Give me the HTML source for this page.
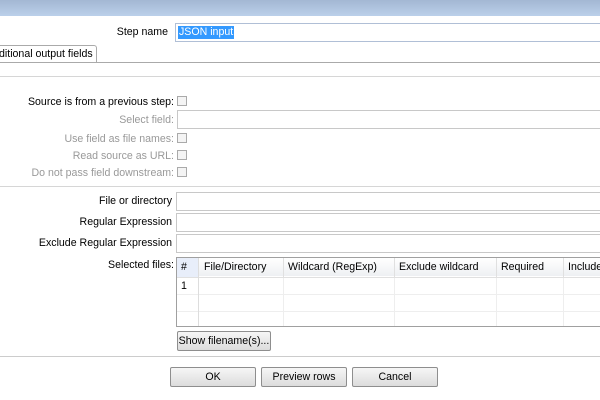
<!DOCTYPE html>
<html><head><style>
body{margin:0;width:600px;height:400px;background:#fff;position:relative;overflow:hidden;font-family:"Liberation Sans","Noto Sans CJK SC",sans-serif;font-size:10.6px;color:#000}
.a{position:absolute;white-space:nowrap}
.lbl{position:absolute;text-align:right;white-space:nowrap;line-height:14px}
.g{color:#999}
.inp{position:absolute;background:#fff;border:1px solid #c8c8c8;box-sizing:border-box}
.cb{position:absolute;width:10px;height:10px;border:1px solid #aaa;background:#f4f4f4;box-sizing:border-box}
.hl{position:absolute;height:1px;background:#d6d6d6;left:0;width:600px}
.btn{position:absolute;height:20px;box-sizing:border-box;border:1px solid #8e8e8e;border-radius:2px;background:linear-gradient(#f6f6f6,#dcdcdc);text-align:center;line-height:18px;white-space:nowrap}
table{border-collapse:collapse;font-size:10.6px;white-space:nowrap}
</style></head><body>
<div class="a" style="left:0;top:0;width:600px;height:16px;background:linear-gradient(#a3b7d3,#bbd0ea)"></div>
<div class="lbl" style="right:432px;top:25px">Step name</div>
<div class="inp" style="left:175px;top:23px;width:430px;height:19px;border-color:#b0bfd6"><span style="position:absolute;left:2px;top:2px;background:#3399ff;color:#fff;line-height:13px;padding:0 1px">JSON input</span></div>
<div class="a" style="left:-2px;top:45px;width:97px;height:17px;border:1px solid #aaa;border-bottom:none;border-radius:0 3px 0 0;line-height:16px;overflow:hidden">ditional output fields</div>
<div class="hl" style="top:62px;background:#aaa"></div>
<div class="hl" style="top:76px"></div>
<div class="lbl" style="right:426px;top:95px">Source is from a previous step:</div>
<div class="cb" style="left:177px;top:96px"></div>
<div class="lbl g" style="right:426px;top:113px">Select field:</div>
<div class="inp" style="left:177px;top:110px;width:430px;height:19px"></div>
<div class="lbl g" style="right:426px;top:132px">Use field as file names:</div>
<div class="cb" style="left:177px;top:133px"></div>
<div class="lbl g" style="right:426px;top:149px">Read source as URL:</div>
<div class="cb" style="left:177px;top:150px"></div>
<div class="lbl g" style="right:426px;top:166px">Do not pass field downstream:</div>
<div class="cb" style="left:177px;top:167px"></div>
<div class="hl" style="top:186px"></div>
<div class="lbl" style="right:428px;top:194px">File or directory</div>
<div class="inp" style="left:176px;top:192px;width:430px;height:19px"></div>
<div class="lbl" style="right:428px;top:215px">Regular Expression</div>
<div class="inp" style="left:176px;top:213px;width:430px;height:19px"></div>
<div class="lbl" style="right:428px;top:236px">Exclude Regular Expression</div>
<div class="inp" style="left:176px;top:234px;width:430px;height:19px"></div>
<div class="lbl" style="right:426px;top:258px">Selected files:</div>
<div class="a" style="left:176px;top:257px;width:430px;height:70px;border:1px solid #a0a0a0;box-sizing:border-box;overflow:hidden">
<table style="width:440px">
<tr style="height:19px;background:linear-gradient(#fff,#eef0f3);border-bottom:1px solid #e0e0e0">
<td style="width:16px;padding-left:4px;border-right:1px solid #ddd;background:#e8eefa">#</td>
<td style="width:78px;padding-left:5px;border-right:1px solid #e0e0e0">File/Directory</td>
<td style="width:105px;padding-left:4px;border-right:1px solid #e0e0e0">Wildcard (RegExp)</td>
<td style="width:96px;padding-left:4px;border-right:1px solid #e0e0e0">Exclude wildcard</td>
<td style="width:61px;padding-left:4px;border-right:1px solid #e0e0e0">Required</td>
<td style="padding-left:4px">Include</td></tr>
<tr style="height:17px;border-bottom:1px solid #eee"><td style="padding-left:4px;border-right:1px solid #ddd">1</td><td style="border-right:1px solid #eee"></td><td style="border-right:1px solid #eee"></td><td style="border-right:1px solid #eee"></td><td style="border-right:1px solid #eee"></td><td></td></tr>
<tr style="height:17px;border-bottom:1px solid #eee"><td style="border-right:1px solid #ddd"></td><td style="border-right:1px solid #eee"></td><td style="border-right:1px solid #eee"></td><td style="border-right:1px solid #eee"></td><td style="border-right:1px solid #eee"></td><td></td></tr>
<tr style="height:17px"><td style="border-right:1px solid #ddd"></td><td style="border-right:1px solid #eee"></td><td style="border-right:1px solid #eee"></td><td style="border-right:1px solid #eee"></td><td style="border-right:1px solid #eee"></td><td></td></tr>
</table></div>
<div class="btn" style="left:177px;top:331px;width:94px">Show filename(s)...</div>
<div class="hl" style="top:356px;background:#ccc"></div>
<div class="btn" style="left:170px;top:367px;width:86px">OK</div>
<div class="btn" style="left:261px;top:367px;width:86px">Preview rows</div>
<div class="btn" style="left:352px;top:367px;width:86px">Cancel</div>
</body></html>
